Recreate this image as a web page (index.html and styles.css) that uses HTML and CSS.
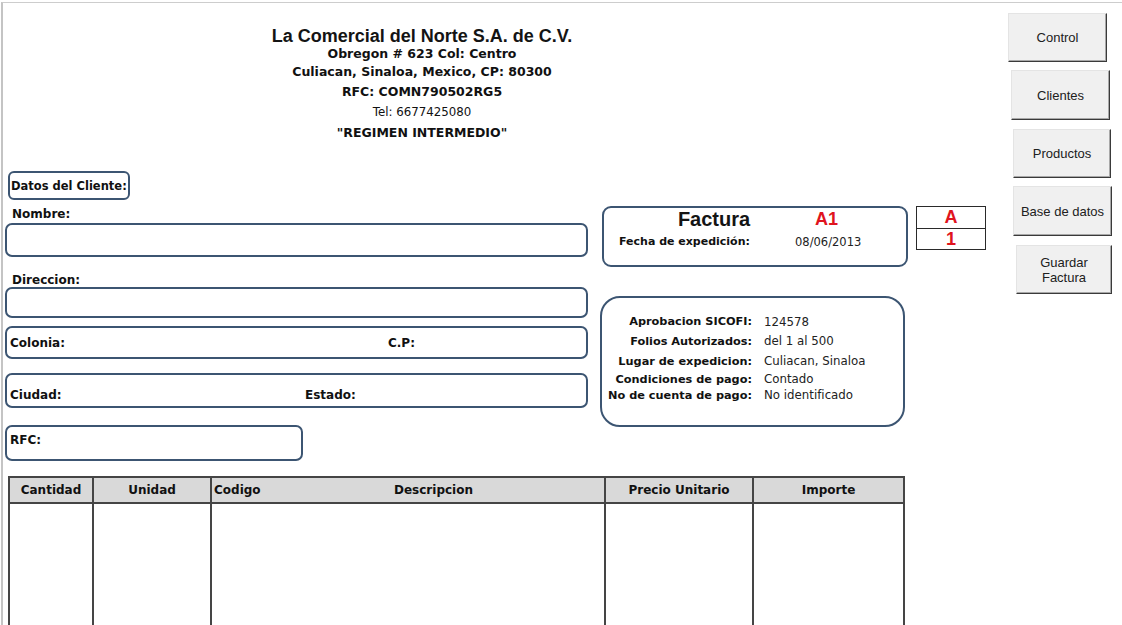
FILE: index.html
```html
<!DOCTYPE html>
<html lang="es">
<head>
<meta charset="utf-8">
<title>Factura</title>
<link rel="stylesheet" href="styles.css">
</head>
<body>
<div class="sheet">
  <div class="main">
    <header class="company">
      <div class="company-name">La Comercial del Norte S.A. de C.V.</div>
      <div class="line l2">Obregon # 623 Col: Centro</div>
      <div class="line l3">Culiacan, Sinaloa, Mexico, CP: 80300</div>
      <div class="line l4">RFC: COMN790502RG5</div>
      <div class="line l5 regular">Tel: 6677425080</div>
      <div class="line l6">"REGIMEN INTERMEDIO"</div>
    </header>

    <section class="form">
      <div class="client">
        <div class="box datos">Datos del Cliente:</div>
        <div class="label lbl-nombre">Nombre:</div>
        <div class="box field f-nombre"></div>
        <div class="label lbl-dir">Direccion:</div>
        <div class="box field f-dir"></div>
        <div class="box field f-colonia">
          <span class="col-a">Colonia:</span><span>C.P:</span>
        </div>
        <div class="box field f-ciudad">
          <span class="col-b">Ciudad:</span><span>Estado:</span>
        </div>
        <div class="box field f-rfc"><span>RFC:</span></div>
      </div>

      <div class="invoice">
        <div class="invoice-top">
          <div class="box factura">
            <div class="fact-row1">
              <span class="fact-title">Factura</span>
              <span class="fact-num">A1</span>
            </div>
            <div class="fact-row2">
              <span class="fact-label">Fecha de expedición:</span>
              <span class="fact-date">08/06/2013</span>
            </div>
          </div>
          <div class="serie">
            <div class="serie-cell">A</div>
            <div class="serie-cell">1</div>
          </div>
        </div>
        <div class="box sicofi">
          <span class="k">Aprobacion SICOFI:</span><span class="v">124578</span>
          <span class="k">Folios Autorizados:</span><span class="v">del 1 al 500</span>
          <span class="k">Lugar de expedicion:</span><span class="v">Culiacan, Sinaloa</span>
          <span class="k">Condiciones de pago:</span><span class="v">Contado</span>
          <span class="k">No de cuenta de pago:</span><span class="v">No identificado</span>
        </div>
      </div>
    </section>

    <table class="items">
      <colgroup>
        <col class="c1"><col class="c2"><col class="c3"><col class="c4"><col class="c5"><col class="c6">
      </colgroup>
      <thead>
        <tr>
          <th>Cantidad</th>
          <th>Unidad</th>
          <th class="left">Codigo</th>
          <th>Descripcion</th>
          <th>Precio Unitario</th>
          <th>Importe</th>
        </tr>
      </thead>
      <tbody>
        <tr>
          <td></td><td></td><td class="nr"></td><td></td><td></td><td></td>
        </tr>
      </tbody>
    </table>
  </div>

  <nav class="actions">
    <button class="btn b1">Control</button>
    <button class="btn b2">Clientes</button>
    <button class="btn b3">Productos</button>
    <button class="btn b4">Base de datos</button>
    <button class="btn b5">Guardar<br>Factura</button>
  </nav>
</div>
</body>
</html>
```

FILE: styles.css
```css
html, body {
  margin: 0;
  padding: 0;
  background: #ffffff;
}

body {
  font-family: "DejaVu Sans", "Noto Sans", sans-serif;
  color: #111111;
  width: 1122px;
  height: 625px;
  overflow: hidden;
}

.sheet {
  display: flex;
  margin-top: 2px;
  margin-left: 1px;
  height: 623px;
  border-top: 1px solid #cdcdcd;
  border-left: 2px solid #c4c4c4;
  box-sizing: border-box;
  overflow: hidden;
}

.main {
  flex: 0 0 1005px;
  display: flex;
  flex-direction: column;
}

/* ---------- header ---------- */
.company {
  width: 838px;
  padding-top: 23px;
  text-align: center;
  font-weight: bold;
  font-size: 12.5px;
}

.company-name {
  font-family: "Liberation Sans", Arial, sans-serif;
  font-size: 18px;
  line-height: 20px;
  color: #141414;
}

.line { white-space: nowrap; }
.l2 { line-height: 16px; }
.l3 { line-height: 20px; }
.l4 { line-height: 19px; }
.l5 { line-height: 22px; }
.l6 { line-height: 19px; }

.regular {
  font-weight: normal;
  font-size: 11.8px;
}

/* ---------- form ---------- */
.form {
  display: grid;
  grid-template-columns: 583px 1fr;
  column-gap: 12px;
  margin-top: 29px;
  padding-left: 2px;
}

.box {
  border: 2px solid #3c5572;
  border-radius: 7px;
  box-sizing: border-box;
}

.client {
  display: flex;
  flex-direction: column;
  font-size: 12px;
  font-weight: bold;
}

.datos {
  margin-left: 3px;
  width: 122px;
  height: 29px;
  border-radius: 6px;
  padding-left: 1px;
  display: flex;
  align-items: center;
  white-space: nowrap;
  font-size: 11.5px;
}

.label {
  line-height: 14px;
  padding-left: 7px;
}

.lbl-nombre { margin-top: 7px; }
.lbl-dir { margin-top: 16px; }

.field {
  display: flex;
  align-items: center;
  padding-left: 3px;
}

.f-nombre { margin-top: 2px; height: 34px; }
.f-dir { height: 31px; }
.f-colonia { margin-top: 8px; height: 33px; }
.f-ciudad {
  margin-top: 14px;
  height: 35px;
  align-items: flex-end;
  padding-bottom: 4px;
}
.f-rfc {
  margin-top: 17px;
  width: 298px;
  height: 36px;
  padding-bottom: 6px;
}

.col-a { width: 378px; }
.col-b { width: 295px; }

/* ---------- invoice ---------- */
.invoice {
  padding-top: 35px;
  display: flex;
  flex-direction: column;
}

.invoice-top {
  display: flex;
  align-items: flex-start;
}

.factura {
  margin-left: 2px;
  width: 306px;
  height: 61px;
  border-radius: 9px;
  padding-left: 15px;
}

.fact-row1 {
  display: flex;
  align-items: center;
  height: 22px;
  font-family: "Liberation Sans", Arial, sans-serif;
  font-weight: bold;
}

.fact-title {
  width: 190px;
  text-align: center;
  font-size: 20px;
  color: #141414;
}

.fact-num {
  margin-left: 6px;
  font-size: 18px;
  color: #e0141e;
}

.fact-row2 {
  display: flex;
  margin-top: 4px;
  line-height: 16px;
  font-size: 11px;
}

.fact-label {
  width: 176px;
  font-weight: bold;
}

.fact-date {
  font-size: 11.5px;
  color: #222222;
}

.serie {
  margin-left: 8px;
  width: 70px;
  height: 44px;
  border: 1px solid #2a2a2a;
  box-sizing: border-box;
  display: flex;
  flex-direction: column;
}

.serie-cell {
  flex: 1;
  display: flex;
  align-items: center;
  justify-content: center;
  font-family: "Liberation Sans", Arial, sans-serif;
  font-weight: bold;
  font-size: 18px;
  color: #e0141e;
}

.serie-cell + .serie-cell {
  border-top: 1px solid #2a2a2a;
}

.sicofi {
  margin-top: 29px;
  width: 305px;
  height: 131px;
  border-radius: 20px;
  display: grid;
  grid-template-columns: 150px 1fr;
  grid-template-rows: 19px 20px 20px 16px 16px;
  column-gap: 12px;
  align-items: center;
  align-content: start;
  padding-top: 14px;
  font-size: 11.3px;
}

.sicofi .k {
  text-align: right;
  font-weight: bold;
  white-space: nowrap;
}

.sicofi .v {
  font-size: 11.8px;
  color: #222222;
  white-space: nowrap;
}

/* ---------- items table ---------- */
.items {
  margin-top: 15px;
  margin-left: 5px;
  width: 895px;
  border-collapse: collapse;
  table-layout: fixed;
  font-size: 12px;
}

.c1 { width: 84px; }
.c2 { width: 118px; }
.c3 { width: 52px; }
.c4 { width: 342px; }
.c5 { width: 148px; }
.c6 { width: 151px; }

.items th {
  height: 24px;
  padding: 0;
  background: #d9d9d9;
  border: 2px solid #454545;
  font-weight: bold;
  text-align: center;
  white-space: nowrap;
}

.items th:nth-child(3) {
  border-right: none;
  text-align: left;
  padding-left: 2px;
}

.items th:nth-child(4) {
  border-left: none;
}

.items td {
  height: 140px;
  padding: 0;
  border-left: 2px solid #454545;
  border-right: 2px solid #454545;
}

.items td.nr { border-right: none; }
.items td.nr + td { border-left: none; }

/* ---------- action buttons ---------- */
.actions {
  display: flex;
  flex-direction: column;
  padding-top: 10px;
}

.btn {
  height: 49px;
  margin-bottom: 9px;
  padding: 0;
  background: #f0f0f0;
  border-top: 1px solid #e4e4e4;
  border-left: 1px solid #e4e4e4;
  border-right: 1px solid #3a3a3a;
  border-bottom: 1px solid #3a3a3a;
  box-shadow: inset -1px -1px 0 #a8a8a8;
  font-family: "Liberation Sans", Arial, sans-serif;
  font-size: 13px;
  line-height: 15px;
  color: #202020;
  box-sizing: border-box;
}

.b1 { margin-left: 0; width: 99px; }
.b2 { margin-left: 3px; width: 99px; height: 50px; margin-top: -1px; }
.b3 { margin-left: 5px; width: 98px; }
.b4 { margin-left: 5px; width: 99px; height: 50px; margin-top: -1px; }
.b5 { margin-left: 8px; width: 96px; }
```
